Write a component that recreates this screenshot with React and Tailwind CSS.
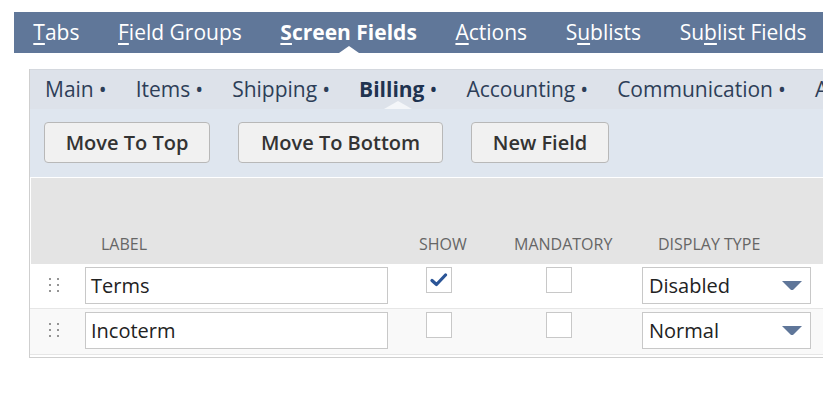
import React from "react";

const font = { fontFamily: '"Open Sans", "Noto Sans", sans-serif' };

function TopTab({ pre, u, post, active }) {
  return (
    <div className={"relative h-full flex items-center px-[19.3px] " + (active ? "font-bold" : "")}>
      <span>
        {pre}
        <span className="underline underline-offset-[3px] decoration-[1.5px]">{u}</span>
        {post}
      </span>
      {active && (
        <div className="absolute bottom-0 left-1/2 -translate-x-1/2 w-0 h-0 border-l-[10px] border-r-[10px] border-b-[7px] border-l-transparent border-r-transparent border-b-white" />
      )}
    </div>
  );
}

function SubTab({ label, active }) {
  return (
    <div className={"relative h-full flex items-center pr-[29px] " + (active ? "font-bold text-[#1f3350]" : "")}>
      <span>{label}</span>
      <span className="ml-[5px] font-normal">•</span>
      {active && (
        <div className="absolute bottom-0 left-[39px] -translate-x-1/2 w-0 h-0 border-l-[14px] border-r-[14px] border-b-[8px] border-l-transparent border-r-transparent border-b-[#f4f6f9]" />
      )}
    </div>
  );
}

function Btn({ children, w }) {
  return (
    <button className={"h-[41px] rounded-[4px] border border-[#b8b8b8] bg-[#f1f1f1] text-[20px] font-semibold text-[#333] flex items-center justify-center " + w}>
      {children}
    </button>
  );
}

function Handle() {
  return (
    <div className="w-[55px] flex justify-start items-start pl-[19px] pt-[11px]">
      <div className="grid grid-cols-2 gap-x-[6px] gap-y-[4px]">
        {[0, 1, 2, 3, 4, 5].map((i) => (
          <div key={i} className="w-[2px] h-[2px] bg-[#959595]" />
        ))}
      </div>
    </div>
  );
}

function Check({ checked }) {
  return (
    <div className="w-[26px] h-[26px] border border-[#c8c8c8] bg-white flex items-center justify-center">
      {checked && (
        <svg width="18" height="16" viewBox="0 0 18 16">
          <path d="M2 8.5 L6.5 12.5 L15.5 3" fill="none" stroke="#2b5597" strokeWidth="3.2" strokeLinecap="round" strokeLinejoin="round" />
        </svg>
      )}
    </div>
  );
}

function Row({ label, show, value, bg, first }) {
  return (
    <div className={"flex h-[45px] pt-[3px] " + bg + (first ? " border-b border-[#e6e6e6]" : "")}>
      <Handle />
      <div className="w-[341px]">
        <div className="w-[303px] h-[37px] border border-[#c8c8c8] bg-white flex items-center pl-[5px] text-[20px] text-[#222]">
          {label}
        </div>
      </div>
      <div className="w-[120px]">
        <Check checked={show} />
      </div>
      <div className="w-[96px]">
        <Check checked={false} />
      </div>
      <div className="w-[169px] h-[37px] border border-[#c8c8c8] bg-white flex items-center justify-between pl-[6px] pr-[8px] text-[20px] text-[#222]">
        <span>{value}</span>
        <svg width="20" height="9" viewBox="0 0 20 9">
          <path d="M0 0 H20 L11.5 8.5 Q10 9.5 8.5 8.5 Z" fill="#5f7699" />
        </svg>
      </div>
    </div>
  );
}

export default function App() {
  return (
    <div className="w-[823px] h-[395px] bg-white overflow-hidden" style={font}>
      <div className="pt-[12px] pl-[14px]">
        <div className="h-[41px] bg-[#607799] flex text-white text-[21px] whitespace-nowrap">
          <TopTab pre="" u="T" post="abs" />
          <TopTab pre="" u="F" post="ield Groups" />
          <TopTab pre="" u="S" post="creen Fields" active />
          <TopTab pre="" u="A" post="ctions" />
          <TopTab pre="S" u="u" post="blists" />
          <TopTab pre="Su" u="b" post="list Fields" />
        </div>
      </div>
      <div className="mt-[16px] ml-[29px] border-l border-b border-[#cfcfcf]">
        <div className="h-[40px] bg-[#dde2ea] flex pl-[15px] text-[21px] text-[#2d3e58] whitespace-nowrap overflow-hidden border-t border-[#d4d8de]">
          <SubTab label="Main" />
          <SubTab label="Items" />
          <SubTab label="Shipping" />
          <SubTab label="Billing" active />
          <SubTab label="Accounting" />
          <SubTab label="Communication" />
          <SubTab label="A" />
        </div>
        <div className="h-[68px] bg-[#dfe6ef] flex gap-[28px] pl-[14px] pt-[13px]">
          <Btn w="w-[166px]">Move To Top</Btn>
          <Btn w="w-[205px]">Move To Bottom</Btn>
          <Btn w="w-[138px]">New Field</Btn>
        </div>
        <div className="h-[87px] bg-[#e4e4e4] border-t border-l border-white flex items-end pb-[8px] text-[16px] text-[#666] whitespace-nowrap">
          <div className="w-[70px]" />
          <div className="w-[318px]">LABEL</div>
          <div className="w-[95px]">SHOW</div>
          <div className="w-[144px]">MANDATORY</div>
          <div>DISPLAY TYPE</div>
        </div>
        <Row label="Terms" show={true} value="Disabled" bg="bg-white" first />
        <div className="border-b border-[#e6e6e6]">
          <Row label="Incoterm" show={false} value="Normal" bg="bg-[#f9f9f9]" />
        </div>
        <div className="h-[2px] bg-white" />
      </div>
    </div>
  );
}
